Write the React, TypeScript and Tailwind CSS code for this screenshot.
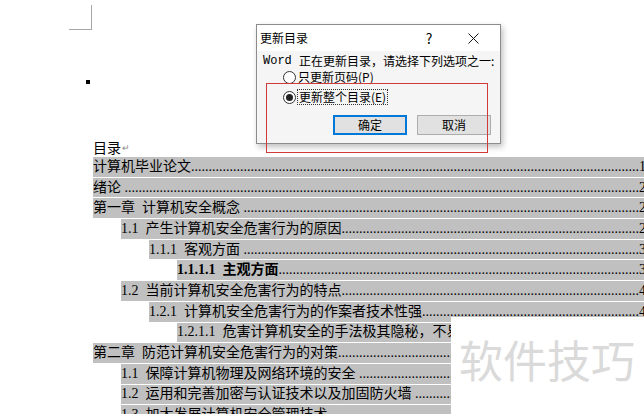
import React from "react";

const rows: { level: number; num?: string; text: string; page: string; bold?: boolean }[] = [
  { level: 0, text: "计算机毕业论文", page: "1" },
  { level: 0, text: "绪论 ", page: "2" },
  { level: 0, num: "第一章", text: "计算机安全概念 ", page: "2" },
  { level: 1, num: "1.1", text: "产生计算机安全危害行为的原因", page: "2" },
  { level: 2, num: "1.1.1", text: "客观方面 ", page: "3" },
  { level: 3, num: "1.1.1.1", text: "主观方面", page: "3", bold: true },
  { level: 1, num: "1.2", text: "当前计算机安全危害行为的特点", page: "4" },
  { level: 2, num: "1.2.1", text: "计算机安全危害行为的作案者技术性强", page: "4" },
  { level: 3, num: "1.2.1.1", text: "危害计算机安全的手法极其隐秘，不易被发现", page: "4" },
  { level: 0, num: "第二章", text: "防范计算机安全危害行为的对策", page: "5" },
  { level: 1, num: "1.1", text: "保障计算机物理及网络环境的安全 ", page: "5" },
  { level: 1, num: "1.2", text: "运用和完善加密与认证技术以及加固防火墙 ", page: "5" },
  { level: 1, num: "1.3", text: "加大发展计算机安全管理技术", page: "6" },
];

const indent = ["ml-0", "ml-[28px]", "ml-[56px]", "ml-[84px]"];
const dots = ".".repeat(200);

export default function App() {
  return (
    <div
      className="relative w-[644px] h-[414px] overflow-hidden bg-white text-black"
      style={{ fontFamily: '"Liberation Serif", "Noto Sans CJK SC", serif' }}
    >
      {/* crop mark */}
      <div className="absolute left-[91px] top-[5px] w-px h-[25px] bg-[#a6a6a6]" />
      <div className="absolute left-[69px] top-[29px] w-[23px] h-px bg-[#a6a6a6]" />
      <div className="absolute left-[86px] top-[80px] w-[4px] h-[4px] bg-black" />

      {/* document body */}
      <div className="pt-[137px] pl-[93px] w-[646px]">
        <div className="h-[20px] flex items-center text-[14px] leading-none">
          <span style={{ fontFamily: '"Noto Sans CJK SC", sans-serif' }}>目录</span>
          <span className="text-[9px] text-[#888] ml-px mt-[3px]">↵</span>
        </div>
        <div className="flex flex-col">
          {rows.map((r, i) => (
            <div key={i} className="h-[20.7px] pb-px">
              <div
                className={`${indent[r.level]} h-full bg-[#c0c0c0] flex items-center text-[14px] leading-none whitespace-pre`}
              >
                {r.num && <span className={r.bold ? "font-bold" : ""}>{r.num + "  "}</span>}
                <span className={r.bold ? "font-bold" : ""}>{r.text}</span>
                <span className="flex-1 overflow-hidden text-clip">{dots}</span>
                <span>{r.page}</span>
              </div>
            </div>
          ))}
        </div>
      </div>

      {/* watermark overlay */}
      <div className="absolute left-[451px] top-[317px] w-[193px] h-[97px] bg-white flex items-start pl-[8px] pt-[20px]">
        <span
          className="text-[44px] leading-none text-[#dadada]"
          style={{ fontFamily: '"Noto Sans CJK SC", sans-serif' }}
        >
          软件技巧
        </span>
      </div>

      {/* dialog */}
      <div
        className="absolute left-[256px] top-[24px] w-[245px] h-[120px] border border-[#8c8c8c] bg-[#f5f5f5] shadow-[2px_3px_6px_rgba(0,0,0,0.25)] text-[12px]"
        style={{ fontFamily: '"Noto Sans CJK SC", sans-serif' }}
      >
        <div className="h-[26px] bg-white flex items-center pl-[3px]">
          <span className="flex-1 leading-none">更新目录</span>
          <span className="w-[34px] text-center text-[14px] leading-none">?</span>
          <span className="w-[54px] flex justify-center">
            <svg width="11" height="11" viewBox="0 0 11 11">
              <path d="M0.5 0.5 L10.5 10.5 M10.5 0.5 L0.5 10.5" stroke="#111" strokeWidth="1" />
            </svg>
          </span>
        </div>
        <div className="pt-[4px] pl-[6px]">
          <div className="h-[12px] flex items-center leading-none whitespace-pre">
            <span style={{ fontFamily: '"Liberation Mono", monospace' }}>Word </span>
            <span>正在更新目录，请选择下列选项之一:</span>
          </div>
          <div className="h-[20px] flex items-center pl-[20px]">
            <span className="w-[13px] h-[13px] rounded-full border border-[#333] bg-white" />
            <span className="ml-[2px] leading-none">只更新页码(P)</span>
          </div>
          <div className="h-[20px] flex items-center pl-[20px]">
            <span className="w-[13px] h-[13px] rounded-full border border-[#333] bg-white flex items-center justify-center">
              <span className="w-[7px] h-[7px] rounded-full bg-[#222]" />
            </span>
            <span className="ml-px px-px leading-none border border-dotted border-[#333] py-px">更新整个目录(E)</span>
          </div>
          <div className="mt-[8px] flex pl-[70px] gap-[10px]">
            <div className="w-[74px] h-[20px] border-2 border-[#0078d7] bg-[#e1e1e1] flex items-center justify-center leading-none">
              确定
            </div>
            <div className="w-[74px] h-[20px] border border-[#adadad] bg-[#e1e1e1] flex items-center justify-center leading-none">
              取消
            </div>
          </div>
        </div>
      </div>

      {/* red highlight box */}
      <div className="absolute left-[266px] top-[83px] w-[222px] h-[70px] border border-[#d03a3a]" />
    </div>
  );
}
